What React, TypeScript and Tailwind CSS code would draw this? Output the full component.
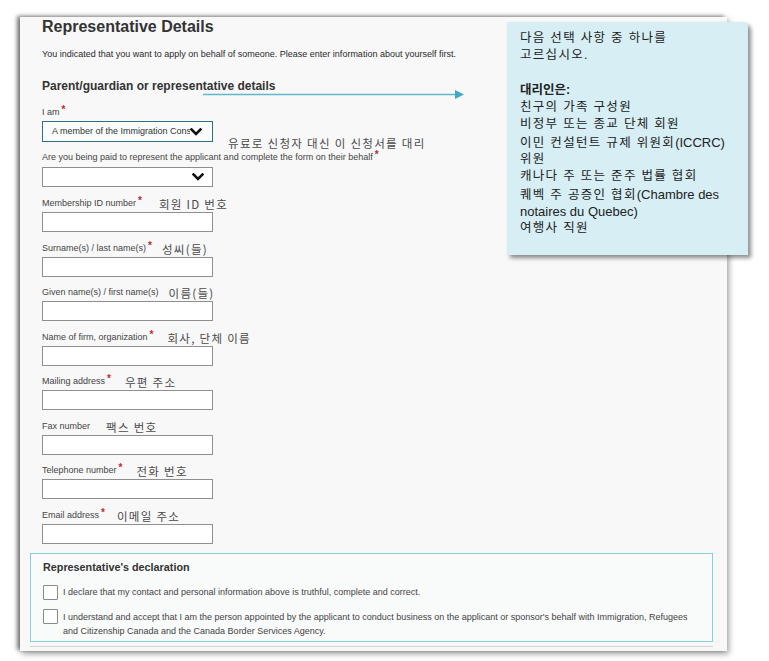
import React from "react";

const fields: { label: string; req: boolean; note: string; gap: string }[] = [
  { label: "Membership ID number", req: true, note: "회원 ID 번호", gap: "ml-[17px]" },
  { label: "Surname(s) / last name(s)", req: true, note: "성씨(들)", gap: "ml-[10px]" },
  { label: "Given name(s) / first name(s)", req: false, note: "이름(들)", gap: "ml-[10px]" },
  { label: "Name of firm, organization", req: true, note: "회사, 단체 이름", gap: "ml-[14px]" },
  { label: "Mailing address", req: true, note: "우편 주소", gap: "ml-[14px]" },
  { label: "Fax number", req: false, note: "팩스 번호", gap: "ml-[16px]" },
  { label: "Telephone number", req: true, note: "전화 번호", gap: "ml-[14px]" },
  { label: "Email address", req: true, note: "이메일 주소", gap: "ml-[12px]" },
];

// [korean part, latin part]
const calloutLines: [string, string][] = [
  ["친구의 가족 구성원", ""],
  ["비정부 또는 종교 단체 회원", ""],
  ["이민 컨설턴트 규제 위원회", "(ICCRC)"],
  ["위원", ""],
  ["캐나다 주 또는 준주 법률 협회", ""],
  ["퀘벡 주 공증인 협회", "(Chambre des"],
  ["", "notaires du Quebec)"],
  ["여행사 직원", ""],
];

function Star() {
  return (
    <span className="relative -top-[3px] ml-[2px] text-[10px] font-bold leading-none text-[#c4262e]">*</span>
  );
}

function Chevron() {
  return (
    <svg width="12" height="8" viewBox="0 0 12 8" className="shrink-0">
      <path d="M1.5 1.5 L6 6 L10.5 1.5" fill="none" stroke="#111" strokeWidth="2.6" strokeLinecap="square" />
    </svg>
  );
}

function Note({ children, className = "" }: { children: React.ReactNode; className?: string }) {
  return (
    <span className={`font-['Noto_Sans_CJK_KR',sans-serif] text-[11.5px] leading-[14px] tracking-[1.3px] text-[#4a4a4a] ${className}`}>
      {children}
    </span>
  );
}

function Checkbox() {
  return <div className="h-[15px] w-[15px] shrink-0 rounded-[1px] border border-[#8a8a8a] bg-white" />;
}

export default function App() {
  return (
    <div className="relative h-[661px] w-[769px] overflow-hidden bg-white pl-[20px] pt-[17px] font-['Liberation_Sans','Noto_Sans_CJK_KR',sans-serif]">
      {/* Form card */}
      <div className="relative h-[634px] w-[707px] bg-[#f8f8f8] px-[22px] shadow-[-3px_-1px_4px_rgba(0,0,0,0.5),2px_3px_6px_rgba(0,0,0,0.35)]">
        <h1 className="text-[16px] font-bold leading-[20px] text-[#333]">Representative Details</h1>
        <p className="mt-[11px] text-[9px] leading-[12px] text-[#2a2a2a]">
          You indicated that you want to apply on behalf of someone. Please enter information about yourself first.
        </p>
        <h2 className="mt-[19px] text-[12px] font-bold leading-[14px] text-[#333]">
          Parent/guardian or representative details
        </h2>

        {/* I am */}
        <div className="mt-[10px] flex h-[14px] translate-y-[3px] items-center">
          <span className="text-[9px] text-[#444]">I am</span>
          <Star />
        </div>
        <div className="mt-[4px] flex h-[21px] w-[171px] items-center border-[1.5px] border-[#2f6f84] bg-[#fafcfc] pl-[9px] pr-[8px]">
          <span className="w-[138px] overflow-hidden whitespace-nowrap text-[9px] text-[#333]">
            A member of the Immigration Consultants of Canada Regulatory Council
          </span>
          <Chevron />
        </div>

        {/* Paid */}
        <div className="mt-[7px] flex h-[14px] translate-y-[2px] items-center">
          <span className="text-[9px] text-[#444]">
            Are you being paid to represent the applicant and complete the form on their behalf
          </span>
          <Star />
        </div>
        <div className="mt-[4px] flex h-[20px] w-[171px] items-center justify-end border border-[#8f8f8f] bg-white pr-[8px]">
          <Chevron />
        </div>

        <div className="mt-[8px]">
          {fields.map((f) => (
            <div key={f.label} className="h-[44.5px]">
              <div className="flex h-[14px] translate-y-[2px] items-center">
                <span className="text-[9px] text-[#444]">{f.label}</span>
                {f.req && <Star />}
                <Note className={f.gap}>{f.note}</Note>
              </div>
              <div className="mt-[3px] h-[20px] w-[171px] border border-[#8f8f8f] bg-white" />
            </div>
          ))}
        </div>

        {/* Declaration */}
        <div className="-ml-[12px] mt-[1.5px] h-[89px] w-[683px] border border-[#86cfd5] bg-[#f9fafa] pl-[12px] pt-[7px]">
          <div className="text-[10.8px] font-bold leading-[12px] text-[#333]">Representative's declaration</div>
          <div className="mt-[12px] flex items-center gap-[5px]">
            <Checkbox />
            <span className="text-[9px] leading-[14px] text-[#444]">
              I declare that my contact and personal information above is truthful, complete and correct.
            </span>
          </div>
          <div className="mt-[9px] flex items-start gap-[5px]">
            <Checkbox />
            <span className="pt-[1px] text-[9px] leading-[14px] text-[#444]">
              I understand and accept that I am the person appointed by the applicant to conduct business on the applicant or sponsor's behalf with Immigration, Refugees
              <br />
              and Citizenship Canada and the Canada Border Services Agency.
            </span>
          </div>
        </div>
        <div className="-ml-[12px] mt-[4px] h-[1px] w-[683px] bg-[#d4d4d4]" />

        {/* Annotation + arrow */}
        <Note className="absolute left-[208px] top-[119px] whitespace-nowrap">유료로 신청자 대신 이 신청서를 대리</Note>
        <svg className="absolute left-[183px] top-[72px]" width="262" height="12" viewBox="0 0 262 12">
          <line x1="0" y1="5.5" x2="253" y2="5.5" stroke="#5db7cd" strokeWidth="1.3" />
          <polygon points="252,1 261,5.5 252,10" fill="#3fa9c6" />
        </svg>
      </div>

      {/* Callout */}
      <div className="absolute left-[507px] top-[22px] h-[233px] w-[241px] rounded-tr-[5px] bg-[#d6eef4] pl-[13px] pt-[7.5px] text-[12.5px] leading-[17.35px] text-[#222] shadow-[3px_3px_4px_rgba(0,0,0,0.45)]">
        <div className="h-[17.35px] whitespace-nowrap tracking-[1.3px]">다음 선택 사항 중 하나를</div>
        <div className="h-[17.35px] whitespace-nowrap tracking-[1.3px]">고르십시오.</div>
        <div className="h-[17.35px]" />
        <div className="h-[17.35px] whitespace-nowrap font-bold">대리인은:</div>
        {calloutLines.map(([ko, en]) => (
          <div key={ko + en} className="h-[17.35px] whitespace-nowrap">
            {ko && <span className="tracking-[1.3px]">{ko}</span>}
            {en && <span className="text-[13px] leading-[17.35px]">{en}</span>}
          </div>
        ))}
      </div>
    </div>
  );
}
